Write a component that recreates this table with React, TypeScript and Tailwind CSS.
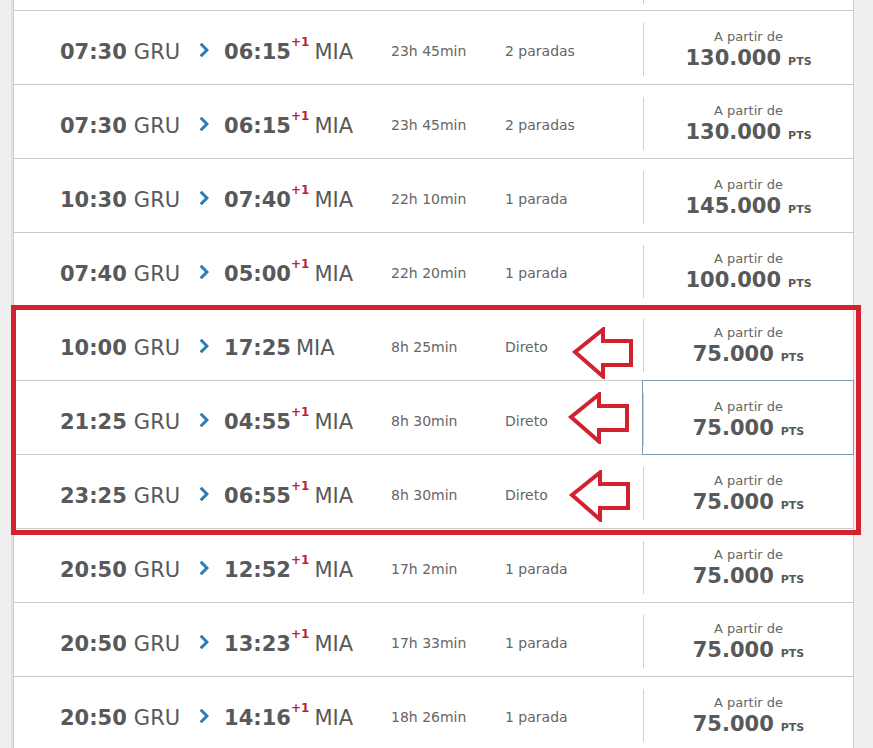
import React from "react";

type Flight = {
  dep: string;
  arr: string;
  plus: boolean;
  dur: string;
  stops: string;
  price: string;
  selected?: boolean;
  empty?: boolean;
};

const flights: Flight[] = [
  // row scrolled out above the viewport, only its divider tail shows
  { dep: "", arr: "", plus: false, dur: "", stops: "", price: "", empty: true },
  { dep: "07:30", arr: "06:15", plus: true, dur: "23h 45min", stops: "2 paradas", price: "130.000" },
  { dep: "07:30", arr: "06:15", plus: true, dur: "23h 45min", stops: "2 paradas", price: "130.000" },
  { dep: "10:30", arr: "07:40", plus: true, dur: "22h 10min", stops: "1 parada", price: "145.000" },
  { dep: "07:40", arr: "05:00", plus: true, dur: "22h 20min", stops: "1 parada", price: "100.000" },
  { dep: "10:00", arr: "17:25", plus: false, dur: "8h 25min", stops: "Direto", price: "75.000" },
  { dep: "21:25", arr: "04:55", plus: true, dur: "8h 30min", stops: "Direto", price: "75.000", selected: true },
  { dep: "23:25", arr: "06:55", plus: true, dur: "8h 30min", stops: "Direto", price: "75.000" },
  { dep: "20:50", arr: "12:52", plus: true, dur: "17h 2min", stops: "1 parada", price: "75.000" },
  { dep: "20:50", arr: "13:23", plus: true, dur: "17h 33min", stops: "1 parada", price: "75.000" },
  { dep: "20:50", arr: "14:16", plus: true, dur: "18h 26min", stops: "1 parada", price: "75.000" },
];

function Chevron() {
  return (
    <svg width="10" height="16" viewBox="0 0 10 16" className="ml-[19px] mr-[15px] mb-[6px] shrink-0">
      <polyline points="1.7,1.7 8,8 1.7,14.3" fill="none" stroke="#2a7bb5" strokeWidth="3" strokeLinejoin="miter" />
    </svg>
  );
}

function RedArrow({ className }: { className: string }) {
  // outlined annotation arrow pointing left
  return (
    <svg width="62" height="52" viewBox="0 0 62 52" className={`absolute ${className}`}>
      <polygon
        points="3,25 31,2.5 31,14 59,14 59,38 31,38 31,49.5"
        fill="none"
        stroke="#d3222f"
        strokeWidth="4"
        strokeLinejoin="miter"
      />
    </svg>
  );
}

function Row({ f }: { f: Flight }) {
  if (f.empty) {
    return (
      <div className="h-[74px] border-b border-[#cbcbcb] flex">
        <div className="w-[629px]" />
        <div className="flex-1 mt-[12px] mb-[6px] border-l border-[#cfcfcf]" />
      </div>
    );
  }

  return (
    <div className="h-[74px] border-b border-[#cbcbcb] flex">
      {/* Route */}
      <div className="w-[377px] pl-[46px] pt-[10px] flex items-center whitespace-nowrap text-[21px] text-[#58595b]">
        <span className="font-bold">{f.dep}</span>
        <span className="ml-[7px]">GRU</span>
        <Chevron />
        <span className="font-bold">{f.arr}</span>
        {f.plus && (
          <span className="font-bold text-[12px] text-[#b8233b] relative -top-[11px]">+1</span>
        )}
        <span className="ml-[5px]">MIA</span>
      </div>

      {/* Duration */}
      <div className="w-[114px] pt-[7px] flex items-center text-[14px] text-[#666]">{f.dur}</div>

      {/* Stops */}
      <div className="w-[138px] pt-[7px] flex items-center text-[14px] text-[#666]">{f.stops}</div>

      {/* Price */}
      <div className="relative flex-1 flex">
        <div className="flex-1 mt-[12px] mb-[8px] pt-[5px] border-l border-[#cfcfcf] flex flex-col items-center justify-center">
          <p className="text-[13px] leading-[16px] text-[#666]">A partir de</p>
          <p className="flex items-baseline gap-[7px] text-[#58595b] font-bold leading-[26px]">
            <span className="text-[21px]">{f.price}</span>
            <span className="text-[11px]">PTS</span>
          </p>
        </div>
        {f.selected && (
          <div className="absolute -top-px -bottom-px -left-px -right-px border border-[#7b9db8]" />
        )}
      </div>
    </div>
  );
}

export default function App() {
  return (
    <div
      className="relative h-[748px] w-[873px] overflow-hidden bg-[#efefef]"
      style={{ fontFamily: '"DejaVu Sans", sans-serif' }}
    >
      <div className="ml-[13px] w-[841px] -mt-[63px] bg-white border-x border-[#cbcbcb] shadow-[-2px_0_0_#e2e2e2]">
        {flights.map((f, i) => (
          <Row key={i} f={f} />
        ))}
      </div>

      {/* Red highlight annotation */}
      <div className="absolute left-[11px] top-[305px] w-[850px] h-[230px] border-[5px] border-[#d3222f]" />
      <RedArrow className="left-[572px] top-[327px]" />
      <RedArrow className="left-[568px] top-[392px]" />
      <RedArrow className="left-[569px] top-[470px]" />
    </div>
  );
}
